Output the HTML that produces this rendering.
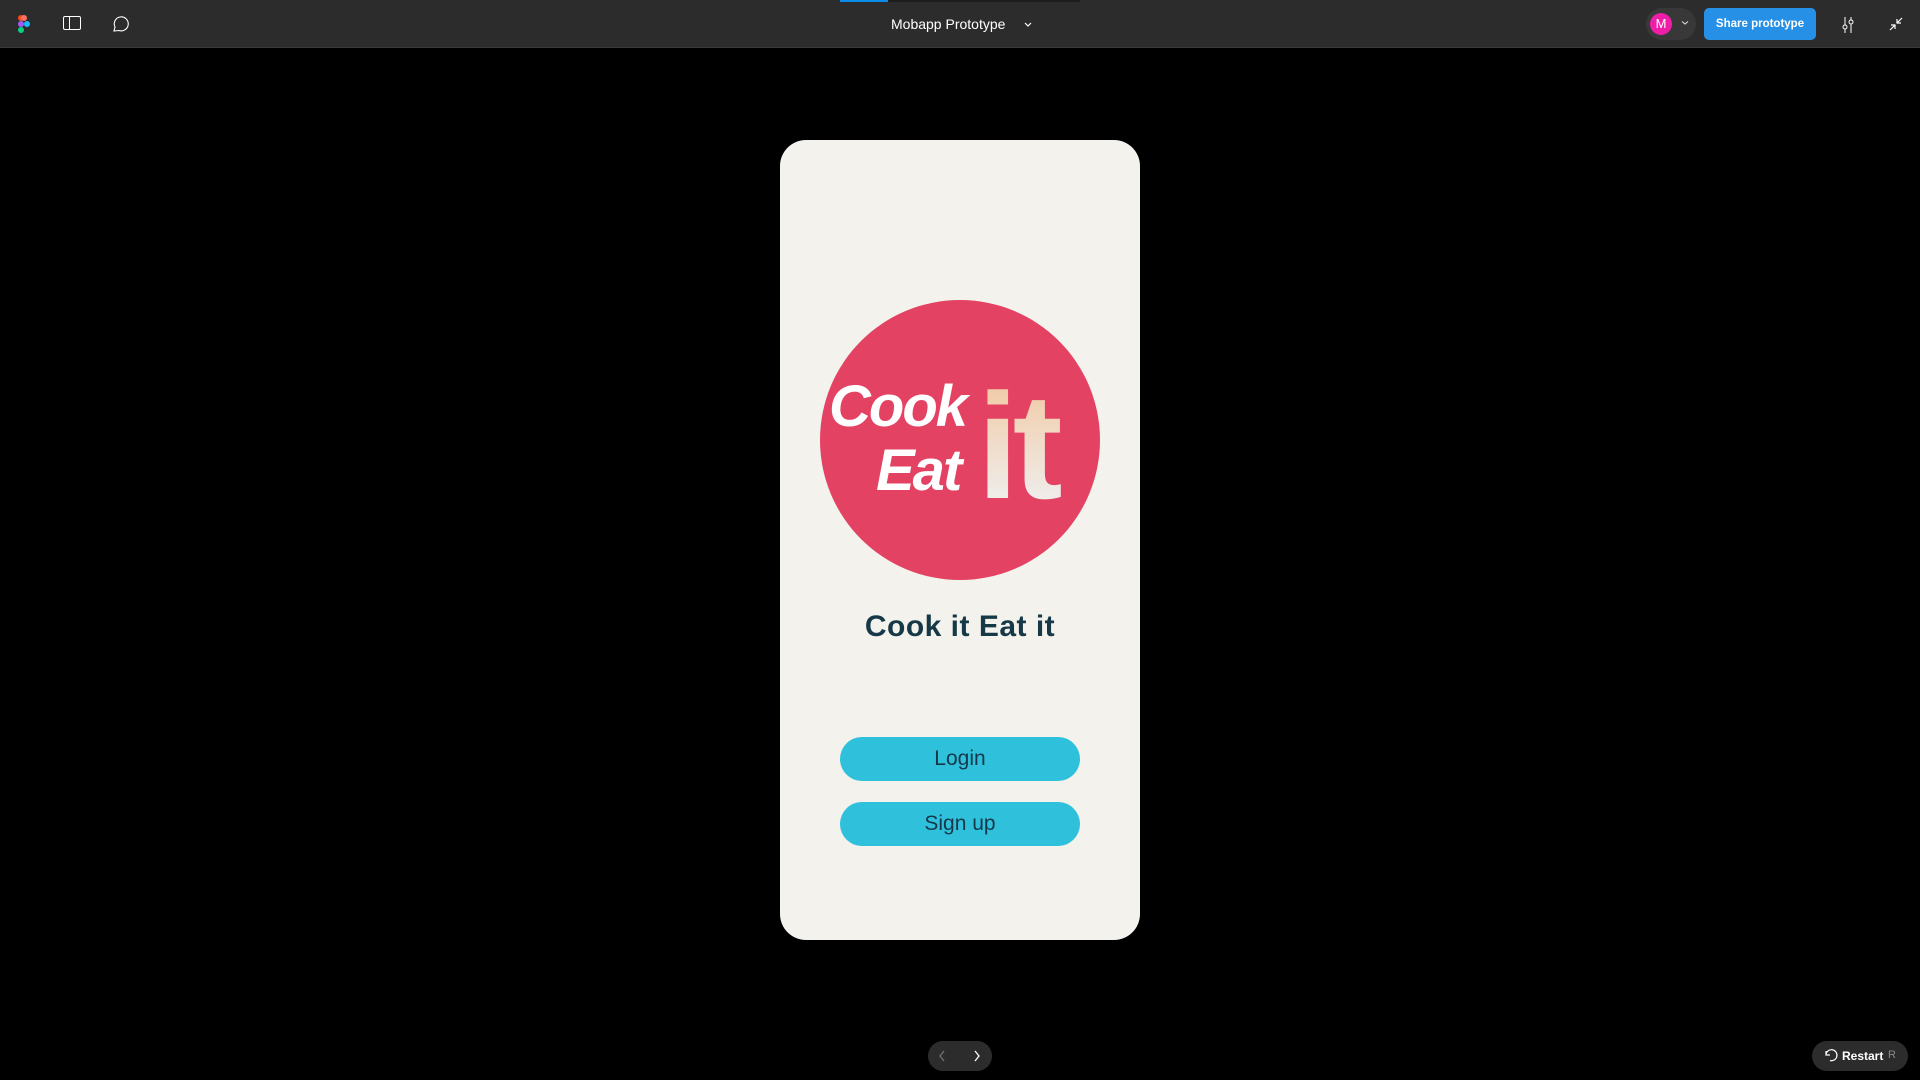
<!DOCTYPE html>
<html><head><meta charset="utf-8"><style>
*{margin:0;padding:0;box-sizing:border-box}
body{width:1920px;height:1080px;background:#000;position:relative;overflow:hidden;font-family:"Liberation Sans",sans-serif}
.top{position:absolute;left:0;top:0;width:1920px;height:48px;background:#2c2c2c;border-bottom:1px solid #3a3a3a}
.abs{position:absolute}
.card{position:absolute;left:780px;top:140px;width:360px;height:800px;background:#f3f2ed;border-radius:26px}
.btn{position:absolute;left:60px;width:240px;height:44px;border-radius:22px;background:#2fc1db;color:#16384a;font-size:21px;text-align:center;line-height:44px}
</style></head><body>
<div class="top">
  <div class="abs" style="left:840px;top:0;width:48px;height:2px;background:#0c8ce9"></div>
  <div class="abs" style="left:888px;top:0;width:192px;height:2px;background:#1e1e1e"></div>
  <svg class="abs" style="left:17px;top:14px" width="14" height="20" viewBox="0 0 14 20">
    <rect x="1" y="1" width="6" height="6" rx="3" fill="#f24e1e"/><rect x="4" y="1" width="6" height="6" rx="3" fill="#ff7262"/>
    <rect x="1" y="7" width="6" height="6" rx="3" fill="#a259ff"/><circle cx="10" cy="10" r="3" fill="#1abcfe"/>
    <rect x="1" y="13" width="6" height="6" rx="3" fill="#0acf83"/>
  </svg>
  <svg class="abs" style="left:63px;top:16px" width="18" height="15" viewBox="0 0 18 15"><rect x="0.5" y="0.5" width="17" height="13" rx="1.5" fill="none" stroke="#fff"/><line x1="6.5" y1="0.5" x2="6.5" y2="13.5" stroke="#fff"/></svg>
  <svg class="abs" style="left:111px;top:16px" width="18" height="16" viewBox="0 0 18 16"><path d="M3 15 L4 11 A7 7 0 1 1 8 14.5 Z" fill="none" stroke="#fff" stroke-width="1.1"/></svg>
  <div class="abs" style="left:891px;top:16px;color:#fff;font-size:14px">Mobapp Prototype</div>
  <svg class="abs" style="left:1023px;top:21px" width="10" height="8" viewBox="0 0 10 8"><path d="M2 2 L5 5 L8 2" fill="none" stroke="#fff" stroke-width="1.2"/></svg>
  <div class="abs" style="left:1646px;top:8px;width:50px;height:32px;border-radius:16px;background:#383838"></div>
  <div class="abs" style="left:1650px;top:13px;width:22px;height:22px;border-radius:11px;background:#ee1ea9;color:#fff;font-size:13px;text-align:center;line-height:22px">M</div>
  <svg class="abs" style="left:1681px;top:20px" width="8" height="6" viewBox="0 0 8 6"><path d="M1 1.5 L4 4 L7 1.5" fill="none" stroke="#ddd" stroke-width="1.1"/></svg>
  <div class="abs" style="left:1704px;top:8px;width:112px;height:32px;border-radius:5px;background:#2590e6;color:#fff;font-size:11.5px;font-weight:bold;text-align:center;line-height:32px">Share prototype</div>
  <svg class="abs" style="left:1840px;top:15px" width="16" height="20" viewBox="0 0 16 20"><line x1="5" y1="2" x2="5" y2="18" stroke="#fff"/><line x1="11" y1="2" x2="11" y2="18" stroke="#fff"/><circle cx="5" cy="12" r="2" fill="#2c2c2c" stroke="#fff"/><circle cx="11" cy="7" r="2" fill="#2c2c2c" stroke="#fff"/></svg>
  <svg class="abs" style="left:1888px;top:16px" width="16" height="16" viewBox="0 0 16 16"><path d="M2 14 L7 9 M3 9 H7 V13 M14 2 L9 7 M9 3 V7 H13" fill="none" stroke="#fff" stroke-width="1.2"/></svg>
</div>
<div class="card">
  <div class="abs" style="left:40px;top:160px;width:280px;height:280px;border-radius:50%;background:#e44262"></div>
  <svg class="abs" style="left:40px;top:160px" width="280" height="280" viewBox="0 0 280 280">
    <defs><linearGradient id="g" x1="0" y1="0" x2="0" y2="1"><stop offset="0" stop-color="#f2c49a"/><stop offset="1" stop-color="#eef6fc"/></linearGradient></defs>
    <text x="9" y="126" font-family="Liberation Sans,sans-serif" font-style="italic" font-weight="bold" font-size="58" fill="#fff" letter-spacing="-2">Cook</text>
    <text x="56" y="190" font-family="Liberation Sans,sans-serif" font-style="italic" font-weight="bold" font-size="58" fill="#fff" letter-spacing="-2">Eat</text>
    <text x="157" y="198" font-family="Liberation Sans,sans-serif" font-weight="bold" font-size="150" fill="url(#g)" letter-spacing="-6">it</text>
  </svg>
  <div class="abs" style="left:0;top:470px;width:360px;text-align:center;font-size:30px;font-weight:bold;color:#173947;letter-spacing:0.5px">Cook it Eat it</div>
  <div class="btn" style="top:597px">Login</div>
  <div class="btn" style="top:662px">Sign up</div>
</div>
<div class="abs" style="left:928px;top:1041px;width:64px;height:30px;border-radius:15px;background:#2c2c2c"></div>
<svg class="abs" style="left:938px;top:1049px" width="44" height="14" viewBox="0 0 44 14"><path d="M6 2 L2 7 L6 12" fill="none" stroke="#777" stroke-width="1.2"/><path d="M37 2 L41 7 L37 12" fill="none" stroke="#fff" stroke-width="1.3"/></svg>
<div class="abs" style="left:1812px;top:1041px;width:96px;height:30px;border-radius:15px;background:#2c2c2c"></div>
<svg class="abs" style="left:1824px;top:1048px" width="14" height="14" viewBox="0 0 14 14"><path d="M2 3 V7 H6 M2 7 A5.5 5.5 0 1 1 6 12.5" fill="none" stroke="#fff" stroke-width="1.2"/></svg>
<div class="abs" style="left:1842px;top:1049px;color:#fff;font-size:12px;font-weight:bold">Restart</div>
<div class="abs" style="left:1888px;top:1049px;color:#888;font-size:11px">R</div>
</body></html>
